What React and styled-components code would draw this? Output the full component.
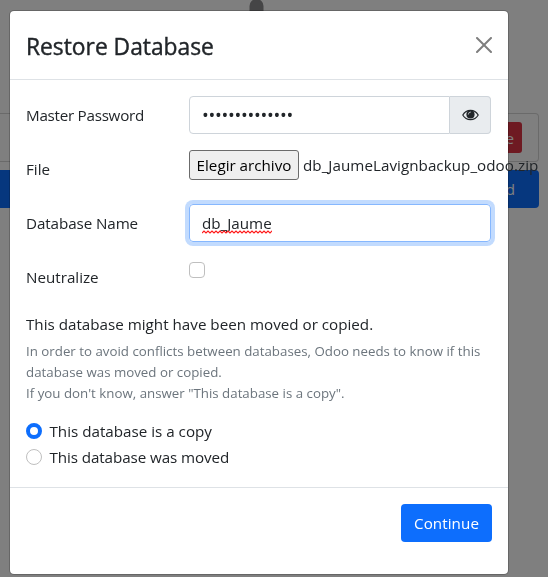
import React from "react";
import styled, { createGlobalStyle, css } from "styled-components";

const GlobalStyle = createGlobalStyle`
  *, *::before, *::after { box-sizing: border-box; }
  body {
    margin: 0;
    overflow: hidden;
    background: #fff;
    color: #212529;
    font: 400 15.2px/24px "Open Sans", "Noto Sans", sans-serif;
  }
`;

const Page = styled.div`
  height: 100vh;
  display: flex;
  flex-direction: column;
  padding-right: 9px;
`;

const Logo = styled.svg`
  display: block;
  width: 15px;
  height: 30px;
  margin: 0 0 83px 249px;
`;

const DatabaseItem = styled.div`
  display: flex;
  justify-content: flex-end;
  height: 49px;
  padding: 8px 16px;
  border: 1px solid rgba(0, 0, 0, 0.17);
  border-left: 0;
  border-radius: 0 4px 4px 0;
`;

const DeleteButton = styled.button`
  height: 31px;
  padding: 0 8px;
  border: 0;
  border-radius: 3px;
  background: #dc3545;
  color: #fff;
  font: inherit;
`;

const PageActions = styled.div`
  display: flex;
  justify-content: flex-end;
  height: 38px;
  margin-top: 8px;
  padding-right: 24px;
  align-items: center;
  border-radius: 0 4px 4px 0;
  background: #0d6efd;
  color: #fff;
`;

const Overlay = styled.div`
  position: fixed;
  inset: 0;
  display: flex;
  align-items: flex-start;
  padding: 10px 0 0 9px;
  background: rgba(0, 0, 0, 0.5);
`;

const Dialog = styled.form`
  width: 500px;
  height: 565px;
  display: flex;
  flex-direction: column;
  border: 1px solid rgba(0, 0, 0, 0.2);
  border-radius: 5px;
  background: #fff;
  background-clip: padding-box;
`;

const Header = styled.header`
  display: flex;
  align-items: center;
  justify-content: space-between;
  height: 69px;
  padding: 2px 16px 0;
  border-bottom: 1px solid #dee2e6;
`;

const Title = styled.h4`
  margin: 2px 0 0;
  font-size: 22.8px;
  font-weight: 500;
  line-height: 36px;
  -webkit-text-stroke: 0.4px #212529;
`;

const CloseButton = styled.button`
  display: flex;
  margin-bottom: 2px;
  padding: 0;
  border: 0;
  background: none;
  opacity: 0.5;
`;

const Body = styled.div`
  flex: 1;
  padding: 16px 16px 0;
`;

const Field = styled.div`
  display: grid;
  grid-template-columns: 163px 302px;
  height: 38px;
  margin-bottom: 16px;
`;

const Label = styled.label`
  padding-top: 7px;
  letter-spacing: ${(p) => p.$spacing || "0"};
`;

const inputBox = css`
  height: 38px;
  border: 1px solid #ced4da;
  border-radius: 4px;
  padding: 6px 12px;
`;

const InputGroup = styled.div`
  display: flex;
`;

const PasswordInput = styled.div`
  ${inputBox}
  flex: 1;
  font-size: 18px;
  letter-spacing: -0.26px;
  border-radius: 4px 0 0 4px;
`;

const RevealButton = styled.button`
  display: flex;
  align-items: center;
  justify-content: center;
  width: 41px;
  padding: 0;
  border: 1px solid #ced4da;
  border-left-width: 0;
  border-radius: 0 4px 4px 0;
  background: #e9ecef;
`;

const NameInput = styled.div`
  ${inputBox}
  border-color: #86b7fe;
  box-shadow: 0 0 0 4px rgba(13, 110, 253, 0.25);
`;

const Misspelled = styled.span`
  position: relative;
  display: inline-block;
`;

const Squiggle = styled.svg`
  position: absolute;
  left: 0;
  top: 19px;
`;

const FileInput = styled.div`
  display: flex;
  align-items: center;
  height: 30px;
  gap: 4px;
  white-space: nowrap;
`;

const FileButton = styled.button`
  flex: none;
  width: 110px;
  height: 30px;
  padding: 0;
  border: 1px solid #6b6b6b;
  border-radius: 3px;
  background: #efefef;
  color: #000;
  font: inherit;
`;

const FileName = styled.span`
  letter-spacing: 0.04px;
`;

const CheckBox = styled.span`
  flex: none;
  width: 16px;
  height: 16px;
  margin-top: 4px;
  border: 1px solid #bfbfbf;
  border-radius: 4px;
  background: #fff;
`;

const Radio = styled.span`
  flex: none;
  width: 16px;
  height: 16px;
  border: ${(p) => (p.$checked ? "4px solid #0d6efd" : "1px solid #bfbfbf")};
  border-radius: 50%;
`;

const Question = styled.div`
  line-height: 25px;
  margin-bottom: 4px;
`;

const Help = styled.p`
  margin: 0 0 15px;
  color: #6c757d;
  font-size: 13.3px;
  line-height: 21px;
`;

const Option = styled.label`
  display: flex;
  align-items: center;
  gap: 7.5px;
  height: 24px;
  margin-bottom: 2px;
  letter-spacing: ${(p) => p.$spacing || "0"};
`;

const Footer = styled.footer`
  display: flex;
  justify-content: flex-end;
  height: 87px;
  padding: 16px 16px 0;
  border-top: 1px solid #dee2e6;
`;

const ContinueButton = styled.button`
  width: 91px;
  height: 38px;
  padding: 0;
  border: 0;
  border-radius: 4px;
  background: #0d6efd;
  color: #fff;
  font: inherit;
  letter-spacing: 0.07px;
`;

const CloseIcon = () => (
  <svg width="16" height="16" viewBox="0 0 16 16">
    <path
      d="M.293.293a1 1 0 011.414 0L8 6.586 14.293.293a1 1 0 111.414 1.414L9.414 8l6.293 6.293a1 1 0 01-1.414 1.414L8 9.414l-6.293 6.293a1 1 0 01-1.414-1.414L6.586 8 .293 1.707a1 1 0 010-1.414z"
      fill="#000"
    />
  </svg>
);

const EyeIcon = () => (
  <svg width="17" height="12" viewBox="0 0 17 12">
    <path
      d="M.8 6C2.500 3 5.300 1.300 8.500 1.300S14.500 3 16.200 6C14.500 9 11.700 10.700 8.500 10.700S2.500 9 .8 6z"
      fill="none"
      stroke="#212529"
      strokeWidth="1.200"
    />
    <circle cx="8.500" cy="5.400" r="4.100" fill="#212529" />
    <path d="M6.300 5.200a2.200 2.200 0 0 1 2.200-2.200" fill="none" stroke="#e9ecef" strokeWidth=".7" strokeLinecap="round" />
  </svg>
);

export default function App() {
  return (
    <>
      <GlobalStyle />
      <Page>
        <Logo viewBox="0 0 15 30">
          <rect x="0.500" y="-1" width="14" height="30" rx="7" fill="#8a8a8c" />
        </Logo>
        <DatabaseItem>
          <DeleteButton>Delete</DeleteButton>
        </DatabaseItem>
        <PageActions>Set Master Password</PageActions>
      </Page>
      <Overlay>
        <Dialog>
          <Header>
            <Title>Restore Database</Title>
            <CloseButton type="button" aria-label="Close">
              <CloseIcon />
            </CloseButton>
          </Header>
          <Body>
            <Field>
              <Label $spacing="-0.26px">Master Password</Label>
              <InputGroup>
                <PasswordInput>••••••••••••••</PasswordInput>
                <RevealButton type="button" aria-label="Show password">
                  <EyeIcon />
                </RevealButton>
              </InputGroup>
            </Field>
            <Field>
              <Label>File</Label>
              <FileInput>
                <FileButton type="button">Elegir archivo</FileButton>
                <FileName>db_JaumeLavignbackup_odoo.zip</FileName>
              </FileInput>
            </Field>
            <Field>
              <Label $spacing="-0.09px">Database Name</Label>
              <NameInput>
                <Misspelled>
                  db_Jaume
                  <Squiggle width="70" height="4" viewBox="0 0 70 4">
                    <path
                      d={"M0 3" + " l2 -2 l2 2".repeat(18)}
                      fill="none"
                      stroke="#ff1a1a"
                      strokeWidth="1.100"
                    />
                  </Squiggle>
                </Misspelled>
              </NameInput>
            </Field>
            <Field>
              <Label>Neutralize</Label>
              <CheckBox role="checkbox" aria-checked="false" />
            </Field>
            <Question>This database might have been moved or copied.</Question>
            <Help>
              In order to avoid conflicts between databases, Odoo needs to know if this
              <br />
              database was moved or copied.
              <br />
              If you don't know, answer "This database is a copy".
            </Help>
            <Option>
              <Radio $checked />
              This database is a copy
            </Option>
            <Option $spacing="-0.09px">
              <Radio />
              This database was moved
            </Option>
          </Body>
          <Footer>
            <ContinueButton type="button">Continue</ContinueButton>
          </Footer>
        </Dialog>
      </Overlay>
    </>
  );
}
